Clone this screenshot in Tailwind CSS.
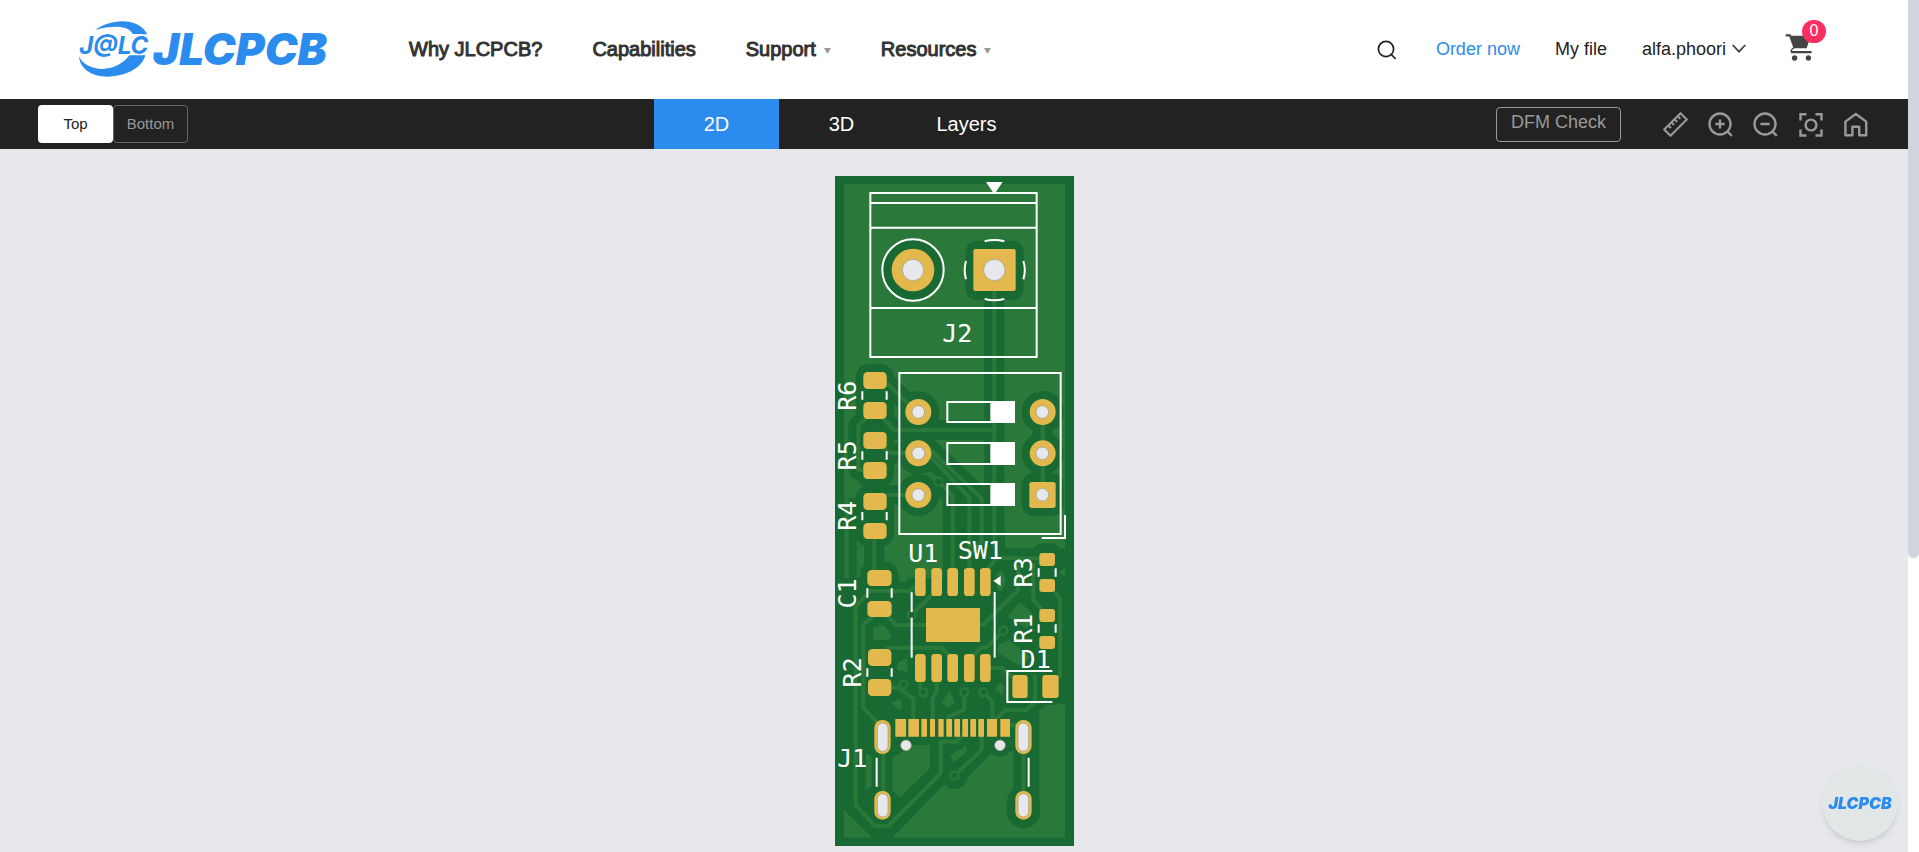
<!DOCTYPE html>
<html lang="en">
<head>
<meta charset="utf-8">
<title>JLCPCB Gerber Viewer</title>
<script src="https://cdn.jsdelivr.net/npm/@tailwindcss/browser@4"></script>
</head>
<body class="flex h-screen overflow-hidden bg-white font-['Liberation_Sans',Arial,sans-serif] text-[#222]">
<div class="flex min-w-0 flex-1 flex-col">
  <header class="flex h-[99px] shrink-0 items-center bg-white pr-[95px] pb-0.5 pl-[78px]">
    <a href="#" aria-label="JLCPCB home" class="mt-0.5 shrink-0">
      <svg class="block h-[57px] w-[251px]" viewBox="54 63 753 171" fill="#2b8cee">
        <path d="M105 90C145 60 232 46 262 103L218 102C207 78 163 74 105 90Z"/>
        <path d="M57 169C60 212 104 230 140 230C202 229 247 202 256 166L208 166C188 195 150 210 116 206C84 202 65 188 57 169Z"/>
        <text x="58" y="161" font-family="Inter, sans-serif" font-size="72" font-weight="700" font-style="italic">J@LC</text>
        <text x="279" y="195" font-family="Inter, sans-serif" font-size="132" font-weight="900" font-style="italic">JLCPCB</text>
      </svg>
    </a>
    <nav class="ml-20 flex items-center gap-[50px] text-[20px] leading-[26px] whitespace-nowrap text-[#333] [-webkit-text-stroke:1px_#333]">
      <a href="#">Why JLCPCB?</a>
      <a href="#">Capabilities</a>
      <a href="#" class="flex items-center gap-2">Support<svg class="mt-1 h-[6px] w-[7px]" viewBox="0 0 7 6" fill="#999"><path d="M0 0H7L3.5 6Z"/></svg></a>
      <a href="#" class="flex items-center gap-2">Resources<svg class="mt-1 h-[6px] w-[7px]" viewBox="0 0 7 6" fill="#999"><path d="M0 0H7L3.5 6Z"/></svg></a>
    </nav>
    <div class="ml-auto flex items-center gap-[35px] text-[18px] leading-6 whitespace-nowrap">
      <button type="button" aria-label="Search" class="mt-0.5 mr-1"><svg class="block size-5" viewBox="0 0 20 20" fill="none" stroke="#222" stroke-width="1.7"><circle cx="9" cy="9" r="7.6"/><path d="M14.2 14.4L18.6 19"/></svg></button>
      <a href="#" class="text-[#2b8cee]">Order now</a>
      <a href="#">My file</a>
      <button type="button" class="flex items-center gap-1.5">alfa.phoori<svg class="h-[9px] w-[14px]" viewBox="0 0 14 9" fill="none" stroke="#444" stroke-width="1.8"><path d="M.7 1L7 7.6L13.3 1"/></svg></button>
      <a href="#" aria-label="Cart" class="relative -mt-1 ml-1 block">
        <svg class="block h-7 w-7" viewBox="0 0 28 28" fill="#444"><path d="M6.3 2.7H26L21.6 15.2H9.7L7.2 16.8V18H26.6V20.3H7.2C5 20.3 5 16.8 7 15.4L8.2 14.2L4.3 3.4H.9Q0 2.2 .9 1.2H5.6Z"/><circle cx="9.6" cy="25" r="2.7"/><circle cx="23.4" cy="25" r="2.7"/></svg>
        <span class="absolute -top-[13px] left-[17px] flex h-[23px] w-6 items-center justify-center rounded-full bg-[#f92f60] text-[16px] leading-none text-white">0</span>
      </a>
    </div>
  </header>

  <div class="grid h-[50px] shrink-0 grid-cols-[1fr_600px_1fr] items-center bg-[#222] px-[38px]">
    <div class="flex text-[15px]">
      <button type="button" class="h-[38px] w-[75px] rounded-sm bg-white text-[#222]">Top</button>
      <button type="button" class="h-[38px] w-[75px] rounded-sm border border-[#666] text-[#999]">Bottom</button>
    </div>
    <div class="flex self-stretch text-[20px] text-white">
      <button type="button" class="w-[125px] bg-[#2b8cee]">2D</button>
      <button type="button" class="w-[125px]">3D</button>
      <button type="button" class="w-[125px]">Layers</button>
    </div>
    <div class="flex items-center justify-end gap-5 pr-0.5 text-[#999]">
      <button type="button" class="mr-[22px] h-[35px] w-[125px] rounded border border-[#999] pb-1 text-[18px] leading-6">DFM Check</button>
      <button type="button" aria-label="Measure"><svg class="block size-[25px]" viewBox="0 0 25 25" fill="none" stroke="currentColor" stroke-width="2.1" stroke-linejoin="round"><path d="M17.5 1.2L23.8 7.5L7.5 23.8L1.2 17.5Z"/><path d="M5.3 13.4L8 16.1M8.4 10.3L11.1 13M11.5 7.2L14.2 9.9M14.6 4.1L17.3 6.8"/></svg></button>
      <button type="button" aria-label="Zoom in"><svg class="block size-[25px]" viewBox="0 0 25 25" fill="none" stroke="currentColor" stroke-width="2.4"><circle cx="12" cy="12" r="10.5"/><path d="M12 7.4V16.6M7.4 12H16.6M19.4 19.4L23.8 23.8"/></svg></button>
      <button type="button" aria-label="Zoom out"><svg class="block size-[25px]" viewBox="0 0 25 25" fill="none" stroke="currentColor" stroke-width="2.4"><circle cx="12" cy="12" r="10.5"/><path d="M7.4 12H16.6M19.4 19.4L23.8 23.8"/></svg></button>
      <button type="button" aria-label="Fit to screen"><svg class="block size-[25px]" viewBox="0 0 25 25" fill="none" stroke="currentColor" stroke-width="2.4"><circle cx="13" cy="13" r="5.4"/><path d="M2.5 8.5V2.3H8.5M17.5 2.3H23.5V8.5M23.5 17.5V23.5H17.5M8.5 23.5H2.5V17.5"/></svg></button>
      <button type="button" aria-label="Home"><svg class="block size-[25px]" viewBox="0 0 25 25" fill="none" stroke="currentColor" stroke-width="2.4" stroke-linejoin="round"><path d="M2.4 9.6L12.8 2L23.2 9.6V23.2H16.2V14.8H9.4V23.2H2.4Z"/></svg></button>
    </div>
  </div>

  <main class="flex flex-1 justify-center bg-[#e7e8ec] pt-[27px]">
    <svg class="block h-[670px] w-[239px] shrink-0 overflow-visible" viewBox="45 33 717 2010" role="img" aria-label="PCB top side">
      <defs>
        <g id="traces" fill="none" stroke-linejoin="round">
          <path d="M523 320V1150"/>
          <path d="M165 735L115 782V915H165"/>
          <path d="M80 1240V1000"/>
          <path d="M175 745L222 795H523"/>
          <path d="M185 640L290 740"/>
          <path d="M165 825L210 864H295"/>
          <path d="M165 1010L200 990H295"/>
          <path d="M668 740V990"/>
          <path d="M295 835L448 998V1230"/>
          <path d="M355 950L398 992V1230"/>
          <path d="M310 835L485 1000V1130L448 1170"/>
          <path d="M163 1100V1240"/>
        </g>
        <g id="low" fill="none" stroke-linejoin="round">
          <path d="M300 1250L270 1278H150L107 1325V1920L165 1983H205L362 1825V1725"/>
          <path d="M180 1335L130 1380V1630L190 1690V1920"/>
          <path d="M190 1340L228 1380H490L595 1275V1200"/>
          <path d="M275 1350L345 1280"/>
          <path d="M180 1480L205 1448H365L398 1485"/>
          <path d="M447 1485L485 1447H500L550 1397"/>
          <path d="M497 1508H545L575 1535"/>
          <path d="M180 1567H230L280 1600V1690"/>
          <path d="M300 1530V1570L310 1582"/>
          <path d="M350 1530V1580L338 1600V1690"/>
          <path d="M433 1582V1635L385 1655V1700"/>
          <path d="M490 1582L517 1608V1670"/>
          <path d="M485 1700V1755L403 1832"/>
          <path d="M497 1220L530 1180H680"/>
          <path d="M640 1195V1305L680 1350"/>
          <path d="M690 1260L720 1300V1540"/>
          <path d="M556 1680H610M520 1670L556 1635H620L645 1610V1530"/>
          <path d="M362 1730H410L435 1700"/>
          <path d="M610 1715V1915"/>
        </g>
        <g id="vias"><circle cx="355" cy="950" r="12"/><circle cx="275" cy="1350" r="12"/><circle cx="550" cy="1397" r="12"/><circle cx="250" cy="1558" r="12"/><circle cx="310" cy="1582" r="12"/><circle cx="433" cy="1582" r="12"/><circle cx="490" cy="1582" r="12"/><circle cx="403" cy="1832" r="12"/></g>
      </defs>
      <rect x="45" y="33" width="717" height="2010" fill="#196932"/>
      <!-- copper pour -->
      <g fill="#2a793b">
        <path d="M72 57H735V1150H555V1080H370V1240H262V1250H235V1230H130L110 1240H72Z"/>
        <path d="M735 1617L680 1620L640 1650L657 1690V1760L580 1758H520L430 1850L370 1860L217 2018H735Z"/>
        <path d="M72 1935V2018H158Z"/>
        <path d="M217 1780L275 1740H330V1810L240 1897L217 1875Z"/>
        <path d="M137 1765L155 1775V1865L137 1875Z"/>
        <path d="M160 1385L190 1380L215 1410L205 1425H160Z"/>
        <path d="M562 1355L600 1310L637 1345L622 1390Z"/>
        <path d="M535 1440L565 1425L632 1475L600 1502L535 1465Z"/>
        <path d="M235 1490L262 1480V1520L230 1515Z"/>
        <path d="M215 1615L240 1600L250 1625L235 1635Z"/>
        <path d="M365 1615L388 1575L405 1612L385 1630Z"/>
        <path d="M525 1575L540 1550L552 1565L548 1590Z"/>
        <path d="M530 1225L545 1215L558 1245L545 1280L530 1270Z"/>
        <path d="M392 1770L440 1740V1762L400 1792Z"/>
        <path d="M715 1222L735 1210V1236Z"/>
      </g>
      <!-- clearances -->
      <use href="#traces" stroke="#196932" stroke-width="60"/>
      <g fill="#196932">
        <circle cx="279" cy="315" r="90"/>
        <rect x="437" y="228" width="174" height="177" rx="32"/>
        <rect x="107" y="597" width="115" height="180" rx="40"/>
        <rect x="107" y="780" width="115" height="185" rx="40"/>
        <rect x="107" y="960" width="115" height="185" rx="40"/>
        <rect x="120" y="1190" width="115" height="180" rx="40"/>
        <circle cx="295" cy="741" r="63"/><circle cx="295" cy="865" r="63"/><circle cx="295" cy="990" r="63"/>
        <circle cx="668" cy="741" r="63"/><circle cx="668" cy="865" r="63"/><rect x="605" y="925" width="126" height="128" rx="35"/>
        <rect x="635" y="1135" width="92" height="100" rx="35"/>
        <rect x="560" y="1865" width="100" height="124" rx="48"/>
        <rect x="580" y="1640" width="78" height="300"/>
        <circle cx="540" cy="1741" r="34"/><circle cx="403" cy="1832" r="40"/>
      </g>
      <use href="#traces" stroke="#2a793b" stroke-width="12"/>
      <use href="#low" stroke="#2a793b" stroke-width="12"/>
      <use href="#vias" fill="#196932" stroke="#2a793b" stroke-width="7"/>
      <!-- silkscreen -->
      <g fill="none" stroke="#fff" stroke-width="6">
        <path d="M151 84H650V576H151ZM151 114H650M151 188H650M151 429H650"/>
        <circle cx="279" cy="315" r="92"/>
        <path d="M494 229Q523 221 553 229M494 402Q523 410 553 402M438 288Q430 315 438 343M610 288Q619 315 610 343"/>
        <path d="M238 624H722V1107H238ZM735 1050V1119H665"/>
        <path d="M382 711H582V771H382ZM382 834H582V897H382ZM382 957H582V1020H382Z"/>
        <path d="M127 679V704M200 679V704M127 859V884M200 859V884M127 1041V1066M200 1041V1066M142 1270V1298M215 1270V1298M142 1510V1535M215 1510V1535M656 1210V1235M707 1210V1235M656 1378V1403M707 1378V1403"/>
        <path d="M275 1282V1341M275 1358V1478M524 1281V1478M697 1518H562V1611H697M170 1778V1865M626 1778V1865"/>
      </g>
      <g fill="#fff">
        <path d="M498 51H548L523 88ZM520 1248L542 1233V1263Z"/>
        <path d="M511 709H584V773H511ZM511 832H584V899H511ZM511 955H584V1022H511Z"/>
      </g>
      <!-- pads -->
      <g fill="#e3b94d">
        <circle cx="279" cy="315" r="64"/><rect x="460" y="252" width="127" height="126" rx="6"/>
        <rect x="130" y="621" width="70" height="51" rx="13"/><rect x="130" y="711" width="70" height="51" rx="13"/>
        <rect x="130" y="801" width="70" height="51" rx="13"/><rect x="130" y="891" width="70" height="51" rx="13"/>
        <rect x="130" y="984" width="70" height="51" rx="13"/><rect x="130" y="1074" width="70" height="48" rx="13"/>
        <circle cx="295" cy="741" r="39"/><circle cx="295" cy="865" r="39"/><circle cx="295" cy="990" r="39"/>
        <circle cx="668" cy="741" r="39"/><circle cx="668" cy="865" r="39"/><rect x="628" y="951" width="79" height="78" rx="8"/>
        <rect x="142" y="1215" width="73" height="48" rx="13"/><rect x="142" y="1308" width="73" height="48" rx="13"/>
        <rect x="144" y="1452" width="70" height="51" rx="13"/><rect x="144" y="1542" width="70" height="51" rx="13"/>
        <rect x="285" y="1209" width="32" height="84" rx="10"/><rect x="334" y="1209" width="32" height="84" rx="10"/><rect x="382" y="1209" width="32" height="84" rx="10"/><rect x="432" y="1209" width="32" height="84" rx="10"/><rect x="480" y="1209" width="32" height="84" rx="10"/>
        <rect x="285" y="1467" width="32" height="84" rx="10"/><rect x="334" y="1467" width="32" height="84" rx="10"/><rect x="382" y="1467" width="32" height="84" rx="10"/><rect x="432" y="1467" width="32" height="84" rx="10"/><rect x="480" y="1467" width="32" height="84" rx="10"/>
        <rect x="318" y="1329" width="162" height="102"/>
        <rect x="658" y="1164" width="47" height="39" rx="9"/><rect x="658" y="1242" width="47" height="39" rx="9"/>
        <rect x="658" y="1332" width="47" height="39" rx="9"/><rect x="658" y="1413" width="47" height="39" rx="9"/>
        <rect x="577" y="1530" width="46" height="69" rx="9"/><rect x="667" y="1530" width="49" height="69" rx="9"/>
        <path d="M226 1662h32v53h-32zM265 1662h32v53h-32zM304 1662h17v53h-17zM330 1662h15v53h-15zM355 1662h16v53h-16zM379 1662h17v53h-17zM403 1662h17v53h-17zM427 1662h17v53h-17zM451 1662h17v53h-17zM475 1662h17v53h-17zM501 1662h30v53h-30zM541 1662h29v53h-29z"/>
        <rect x="163" y="1665" width="49" height="102" rx="24"/><rect x="586" y="1665" width="49" height="102" rx="24"/>
        <rect x="163" y="1878" width="49" height="86" rx="24"/><rect x="586" y="1878" width="49" height="86" rx="24"/>
      </g>
      <!-- drill holes -->
      <g fill="#e7e8ec" stroke="#9a9787" stroke-width="2">
        <circle cx="279" cy="315" r="32"/><circle cx="523" cy="315" r="32"/>
        <circle cx="295" cy="741" r="19"/><circle cx="295" cy="865" r="19"/><circle cx="295" cy="990" r="19"/>
        <circle cx="667" cy="741" r="19"/><circle cx="667" cy="865" r="19"/><circle cx="667" cy="989" r="19"/>
        <circle cx="258" cy="1741" r="16"/><circle cx="540" cy="1741" r="16"/>
        <rect x="172" y="1674" width="32" height="85" rx="16"/><rect x="594" y="1674" width="32" height="85" rx="16"/>
        <rect x="172" y="1886" width="32" height="70" rx="16"/><rect x="594" y="1886" width="32" height="70" rx="16"/>
      </g>
      <!-- reference designators -->
      <g fill="#fff" font-family="DejaVu Sans Mono, monospace" font-size="75" text-anchor="middle">
        <text x="412" y="530">J2</text>
        <text x="310" y="1191">U1</text>
        <text x="481" y="1181">SW1</text>
        <text x="647" y="1510">D1</text>
        <text x="97" y="1805">J1</text>
        <text transform="translate(109 692) rotate(-90)">R6</text>
        <text transform="translate(109 871) rotate(-90)">R5</text>
        <text transform="translate(109 1052) rotate(-90)">R4</text>
        <text transform="translate(109 1285) rotate(-90)">C1</text>
        <text transform="translate(124 1522) rotate(-90)">R2</text>
        <text transform="translate(637 1222) rotate(-90)">R3</text>
        <text transform="translate(637 1391) rotate(-90)">R1</text>
      </g>
    </svg>
  </main>
</div>

<div class="w-[11px] shrink-0 bg-white"><div class="h-[558px] rounded-b-full bg-[#d0d4dd]"></div></div>

<button type="button" aria-label="JLCPCB support" class="fixed right-[21px] bottom-[11px] flex size-[76px] items-center justify-center rounded-full bg-[#e2e6e6] font-['Inter',sans-serif] text-[16px] font-black text-[#2b8cee] italic shadow-md">JLCPCB</button>
</body>
</html>
